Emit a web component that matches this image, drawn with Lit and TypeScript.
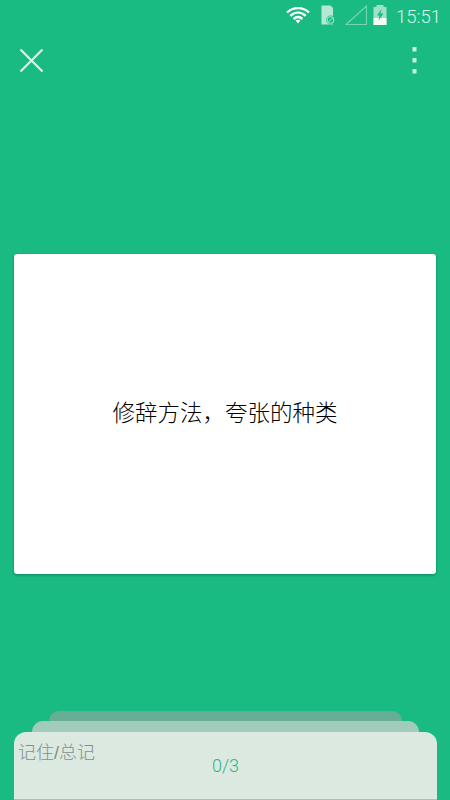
import { LitElement, html, css } from "lit";
import { customElement } from "lit/decorators.js";

@customElement("app-root")
export class AppRoot extends LitElement {
  static styles = css`
    :host {
      display: block;
      width: 450px;
      height: 800px;
      overflow: hidden;
      background: #1abb83;
      font-family: "Liberation Sans", "Noto Sans CJK SC", sans-serif;
    }
    .page { display: flex; flex-direction: column; height: 800px; }
    .status {
      height: 30px;
      display: flex;
      align-items: center;
      justify-content: flex-end;
      padding-right: 9px;
      box-sizing: border-box;
      flex: none;
    }
    .status svg { display: block; flex: none; }
    .wifi { margin-right: 11px; }
    .sim { margin-right: 10px; }
    .signal { margin-right: 6px; }
    .batt { margin-right: 9px; }
    .time {
      color: #d8f3e8;
      font-family: Roboto, "Liberation Sans", sans-serif;
      font-weight: 300;
      font-size: 18.5px;
      line-height: 30px;
      padding-top: 3px;
    }
    .toolbar {
      height: 60px;
      flex: none;
      display: flex;
      align-items: center;
      justify-content: space-between;
      padding: 1px 33px 0 19px;
      box-sizing: border-box;
    }
    .toolbar svg { display: block; }
    .card {
      margin: 164px 14px 0;
      height: 320px;
      flex: none;
      box-sizing: border-box;
      background: #fff;
      border-radius: 3px;
      box-shadow: 0 1px 3px rgba(0, 60, 40, 0.45);
      display: flex;
      align-items: center;
      justify-content: center;
      color: #000;
      font-size: 22.5px;
      font-weight: 300;
      padding-bottom: 6px;
    }
    .stack { margin-top: 137px; flex: none; display: flex; flex-direction: column; align-items: center; }
    .layer { border-radius: 12px 12px 0 0; box-sizing: border-box; }
    .l3 { width: 353px; height: 10px; background: #66ae95; }
    .l2 { width: 387px; height: 11px; background: #a1cbba; }
    .l1 {
      width: 423px;
      height: 68px;
      background: #dbe9e1;
      border-bottom: 1px solid #8fceb4;
      margin-left: 1px;
      display: grid;
      grid-template-columns: 1fr;
    }
    .label {
      color: #848f89;
      font-size: 18px;
      font-weight: 300;
      line-height: 20px;
      padding: 11px 0 0 4px;
      grid-area: 1 / 1;
      white-space: nowrap;
    }
    .count {
      color: #2fb684;
      font-size: 18px;
      line-height: 20px;
      padding-top: 24px;
      text-align: center;
      grid-area: 1 / 1;
      font-family: Roboto, "Liberation Sans", sans-serif;
      font-weight: 300;
    }
  `;

  render() {
    return html`
      <div class="page">
        <div class="status">
          <svg class="wifi" width="24" height="18" viewBox="0 0 24 18">
            <g fill="none" stroke="#fff" stroke-width="2.4">
              <path d="M1 6.5 C7 0.7 17 0.7 23 6.5" />
              <path d="M4.3 9.8 C9 5.5 15 5.5 19.7 9.8" />
              <path d="M7.6 13 C10.5 10.4 13.5 10.4 16.4 13" />
            </g>
            <path d="M9.6 14.6 C11 13.4 13 13.4 14.4 14.6 L12 17.4 Z" fill="#fff" />
          </svg>
          <svg class="sim" width="14" height="20" viewBox="0 0 14 20">
            <path d="M0.5 0.5 H9.5 L12 3 V19.5 H0.5 Z" fill="#b4e8d3" />
            <circle cx="9.5" cy="15" r="4.4" fill="#1abb83" />
            <circle cx="9.5" cy="15" r="3.4" fill="none" stroke="#b4e8d3" stroke-width="1" />
            <path d="M7.2 17.3 L11.8 12.7" stroke="#b4e8d3" stroke-width="1" />
          </svg>
          <svg class="signal" width="22" height="20" viewBox="0 0 22 20">
            <path d="M1 19.5 L21.5 1 V19.5 Z" fill="none" stroke="#72d4b0" stroke-width="1.2" />
          </svg>
          <svg class="batt" width="14" height="20" viewBox="0 0 14 20">
            <rect x="3.5" y="0" width="7" height="2" fill="#9fe0c6" />
            <rect x="0.5" y="2" width="13" height="18" fill="#9fe0c6" />
            <rect x="0.5" y="13" width="13" height="7" fill="#f2fbf7" />
            <path d="M8.5 4 L4 10.5 H6.5 L5.5 15.5 L10.5 8.5 H7.5 Z" fill="#1abb83" />
          </svg>
          <span class="time">15:51</span>
        </div>
        <div class="toolbar">
          <svg width="25" height="25" viewBox="0 0 25 25">
            <path d="M1.5 1.5 L23.5 23.5 M23.5 1.5 L1.5 23.5" stroke="#d6f5e8" stroke-width="2.2" fill="none" />
          </svg>
          <svg width="5" height="27" viewBox="0 0 5 27">
            <rect x="0.5" y="0" width="4" height="4.5" fill="#c8f0e0" />
            <rect x="0.5" y="11" width="4" height="4.5" fill="#c8f0e0" />
            <rect x="0.5" y="22" width="4" height="4.5" fill="#c8f0e0" />
          </svg>
        </div>
        <div class="card">修辞方法，夸张的种类</div>
        <div class="stack">
          <div class="layer l3"></div>
          <div class="layer l2"></div>
          <div class="layer l1">
            <div class="label">记住/总记</div>
            <div class="count">0/3</div>
          </div>
        </div>
      </div>
    `;
  }
}
